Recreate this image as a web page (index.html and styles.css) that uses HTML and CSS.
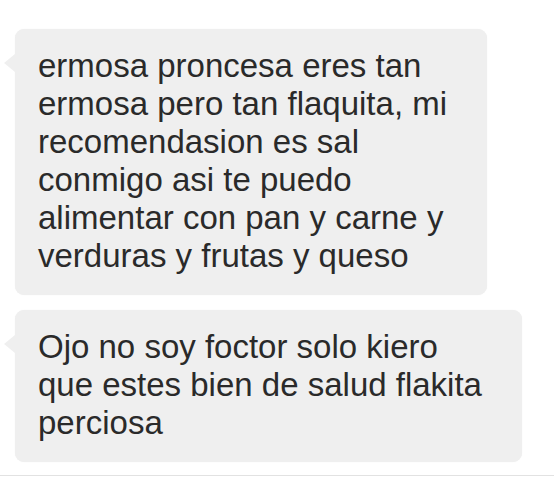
FILE: index.html
```html
<!DOCTYPE html>
<html>
<head>
    <title>Mensajes</title>
    <link rel="stylesheet" href="styles.css">
</head>
<body>
    <div class="thread">
        <!-- received messages -->
        <div class="bubble">
            ermosa proncesa eres tan<br>
            ermosa pero tan flaquita, mi<br>
            recomendasion es sal<br>
            conmigo asi te puedo<br>
            alimentar con pan y carne y<br>
            verduras y frutas y queso
        </div>
        <div class="bubble">
            Ojo no soy foctor solo kiero<br>
            que estes bien de salud flakita<br>
            perciosa
        </div>
    </div>
    <div class="divider"></div>
</body>
</html>
```

FILE: styles.css
```css
body {
    margin: 0;
    background: #ffffff;
    font-family: "Liberation Sans", Arial, sans-serif;
}

.thread {
    display: flex;
    flex-direction: column;
    align-items: flex-start;
    gap: 15px;
    padding: 29px 0 0 15px;
}

.bubble {
    position: relative;
    flex-shrink: 0;
    background: #efefef;
    color: #2a2a2a;
    font-size: 33px;
    line-height: 38px;
    padding: 18px 40px 20px 23px;
    border-radius: 9px;
    box-shadow: 0 0 1px rgba(0, 0, 0, 0.08);
}

.bubble::before {
    content: "";
    position: absolute;
    left: -11px;
    top: 25px;
    border-right: 11px solid #efefef;
    border-top: 9px solid transparent;
    border-bottom: 9px solid transparent;
}

.divider {
    height: 1px;
    margin-top: 13px;
    background: #e2e2e2;
}
```
